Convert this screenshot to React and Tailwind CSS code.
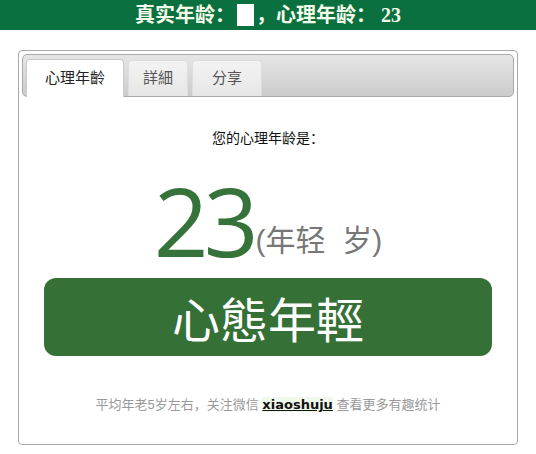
export default function App() {
  const tabs = [
    { label: "心理年齡", w: "w-[98px]", active: true },
    { label: "詳細", w: "w-[60px]" },
    { label: "分享", w: "w-[70px]" },
  ];

  return (
    <div className="min-h-[454px] bg-white font-['Liberation_Sans','Noto_Sans_CJK_SC',sans-serif]">
      <div className="flex h-[30px] items-center justify-center bg-[#0a7040] font-['Liberation_Serif','Noto_Sans_CJK_SC',serif] text-[20px] font-bold text-[#f4fbe8]">
        <span>真实年龄：</span>
        <span className="mx-[2px] inline-block h-[22px] w-[17px] bg-white" />
        <span>，心理年龄： 23</span>
      </div>

      <div className="mx-auto mt-[20px] h-[395px] w-[500px] rounded-[4px] border border-[#aaaaaa] p-[3px]">
        <div className="flex h-[43px] items-end gap-[4px] rounded-[5px] border border-[#aaaaaa] bg-gradient-to-b from-[#e6e6e6] to-[#cbcbcb] px-[3px]">
          {tabs.map((t) => (
            <div
              key={t.label}
              className={`${t.w} flex items-center justify-center rounded-t-[4px] border border-b-0 text-[15px] ${
                t.active
                  ? "-mb-px h-[38px] border-[#cccccc] bg-white text-[#222222]"
                  : "h-[36px] border-[#dddddd] bg-gradient-to-b from-[#f3f3f3] to-[#e6e6e6] text-[#555555]"
              }`}
            >
              {t.label}
            </div>
          ))}
        </div>

        <div className="flex flex-col items-center">
          <div className="mt-[31px] text-[14px] leading-[20px] text-[#111111]">您的心理年龄是：</div>
          <div className="mt-[28px] flex h-[92px] items-end">
            <span className="font-['Open_Sans',sans-serif] text-[96px] leading-[96px] tracking-[-5px] text-[#35733a]">23</span>
            <span className="mb-[10px] ml-[2px] text-[30px] leading-[34px] text-[#777777]">(年轻&nbsp;&nbsp;岁)</span>
          </div>
          <div className="mt-[10px] flex h-[78px] w-[448px] items-center justify-center rounded-[12px] bg-[#357037] font-['Noto_Sans_CJK_TC',serif] text-[48px] text-white">
            心態年輕
          </div>
          <div className="mt-[40px] text-[13px] leading-[18px] text-[#999999]">
            平均年老5岁左右，关注微信{" "}
            <span className="bg-[#eef9ea] font-['DejaVu_Sans',sans-serif] text-[13px] font-bold text-[#111111] underline">xiaoshuju</span>{" "}
            查看更多有趣统计
          </div>
        </div>
      </div>
    </div>
  );
}
